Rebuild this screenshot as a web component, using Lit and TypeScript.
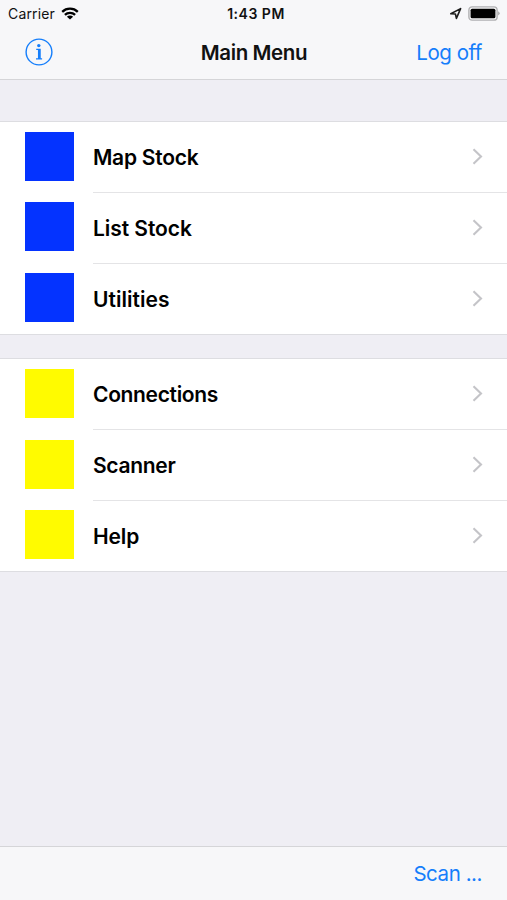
import { LitElement, html, css } from "lit";
import { customElement, property } from "lit/decorators.js";
import { styleMap } from "lit/directives/style-map.js";

@customElement("status-bar")
class StatusBar extends LitElement {
  static styles = css`
    :host { display: grid; grid-template-columns: 1fr auto 1fr; align-items: center; height: 28px; padding: 0 7px 0 8px; font-size: 14px; line-height: 28px; color: #111; }
    .left, .right { display: flex; align-items: center; }
    .left { gap: 6px; letter-spacing: 0.15px; }
    .right { justify-content: flex-end; gap: 6px; padding-bottom: 2px; }
    .time { font-weight: 600; letter-spacing: 0.5px; padding-left: 4px; }
    svg { display: block; }
    .wifi { margin-bottom: 2px; }
  `;
  render() {
    return html`
      <div class="left">
        <span>Carrier</span>
        <svg class="wifi" width="18" height="13" viewBox="0 0 18 13">
          <path d="M1.2 4.8A11.3 11.3 0 0 1 16.8 4.8M3.9 7.9A7.3 7.3 0 0 1 14.1 7.9" fill="none" stroke="#000" stroke-width="2.3"/>
          <path d="M9 12.6L5.9 9.7A4.4 4.4 0 0 1 12.1 9.7Z" fill="#000"/>
        </svg>
      </div>
      <span class="time">1:43 PM</span>
      <div class="right">
        <svg width="13" height="13" viewBox="0 0 13 13">
          <path d="M11.6 1.6L1.8 6.8L6.4 7L7.4 11.4Z" fill="none" stroke="#1c1c1c" stroke-width="1.6" stroke-linejoin="round"/>
        </svg>
        <svg width="32" height="15" viewBox="0 0 32 15">
          <rect x="0.9" y="0.9" width="28.2" height="13.2" rx="3.2" fill="#f7f7f8" stroke="#b0b0b2" stroke-width="1.4"/>
          <rect x="2.6" y="2.7" width="24.8" height="9.6" rx="1.5" fill="#000"/>
          <path d="M30.2 5.2Q31.6 6 31.6 7.3T30.2 9.4Z" fill="#a3a3a5"/>
        </svg>
      </div>`;
  }
}

@customElement("menu-row")
class MenuRow extends LitElement {
  @property() label = "";
  @property() tone = "blue";
  @property({ type: Number }) tracking = 0;
  static styles = css`
    :host { display: flex; align-items: center; height: 70.83px; padding-left: 25.3px; box-sizing: border-box; }
    .tile { width: 49px; height: 49px; flex: none; margin-bottom: 2.6px; }
    .blue { background: #0433ff; }
    .yellow { background: #fffb00; }
    .body { flex: 1; display: flex; align-items: center; justify-content: space-between; height: 100%; margin-left: 18.7px; padding-right: 24px; box-sizing: border-box; border-bottom: 1px solid #e4e4e6; }
    :host([last]) .body { border-bottom-color: transparent; }
    .label { font-size: 21px; font-weight: 600; line-height: 28px; color: #000; padding-top: 2px; }
    svg { display: block; margin-bottom: 1px; }
  `;
  render() {
    return html`
      <div class="tile ${this.tone}"></div>
      <div class="body">
        <span class="label" style=${styleMap({ letterSpacing: `${this.tracking}px` })}>${this.label}</span>
        <svg width="11" height="17" viewBox="0 0 11 17">
          <path d="M1.5 1.3L9 8.5L1.5 15.7" fill="none" stroke="#c4c4c8" stroke-width="2.1"/>
        </svg>
      </div>`;
  }
}

@customElement("app-root")
class AppRoot extends LitElement {
  static styles = css`
    :host { display: flex; flex-direction: column; height: 900px; overflow: hidden; background: #efeef4; font-family: Inter, "Liberation Sans", sans-serif; }
    .top { background: #f7f7f9; height: 80px; box-sizing: border-box; border-bottom: 1px solid #d5d5d8; flex: none; }
    .nav { display: grid; grid-template-columns: 1fr auto 1fr; align-items: center; height: 49px; padding: 0 25px; font-size: 21px; line-height: 28px; }
    .info { display: block; margin-bottom: 1px; }
    .title { font-weight: 600; color: #111; font-size: 20.5px; letter-spacing: -0.4px; padding-left: 1px; }
    .action { color: #157efb; text-align: right; font-size: 20.5px; letter-spacing: -0.45px; }
    main { flex: 1; padding-top: 41px; }
    .group { background: #fff; border-top: 1px solid #dddde1; border-bottom: 1px solid #dddde1; margin-bottom: 23.7px; height: 213.5px; box-sizing: border-box; }
    .toolbar { flex: none; display: flex; align-items: center; justify-content: flex-end; height: 54px; box-sizing: border-box; padding-right: 25px; background: #f7f7f9; border-top: 1px solid #d5d5d8; }
  `;
  groups = [
    { tone: "blue", items: [["Map Stock", -0.25], ["List Stock", -0.05], ["Utilities", 0.05]] },
    { tone: "yellow", items: [["Connections", -0.33], ["Scanner", -0.3], ["Help", -0.1]] },
  ];
  render() {
    return html`
      <header class="top">
        <status-bar></status-bar>
        <div class="nav">
          <svg class="info" width="28" height="28" viewBox="0 0 28 28">
            <circle cx="14" cy="14" r="12.9" fill="none" stroke="#157efb" stroke-width="1.4"/>
            <circle cx="13.8" cy="7.6" r="1.7" fill="#157efb"/>
            <path d="M11.2 11.4H15V20.3M11 20.9H17.1" fill="none" stroke="#157efb" stroke-width="1.3"/>
            <path d="M14.1 11V21" stroke="#157efb" stroke-width="2.3"/>
          </svg>
          <span class="title">Main Menu</span>
          <span class="action">Log off</span>
        </div>
      </header>
      <main>
        ${this.groups.map((g) => html`<section class="group">
          ${g.items.map(([label, tracking], i) => html`<menu-row .label=${label} .tracking=${tracking} .tone=${g.tone} ?last=${i === g.items.length - 1}></menu-row>`)}
        </section>`)}
      </main>
      <footer class="toolbar"><span class="action">Scan ...</span></footer>`;
  }
}
